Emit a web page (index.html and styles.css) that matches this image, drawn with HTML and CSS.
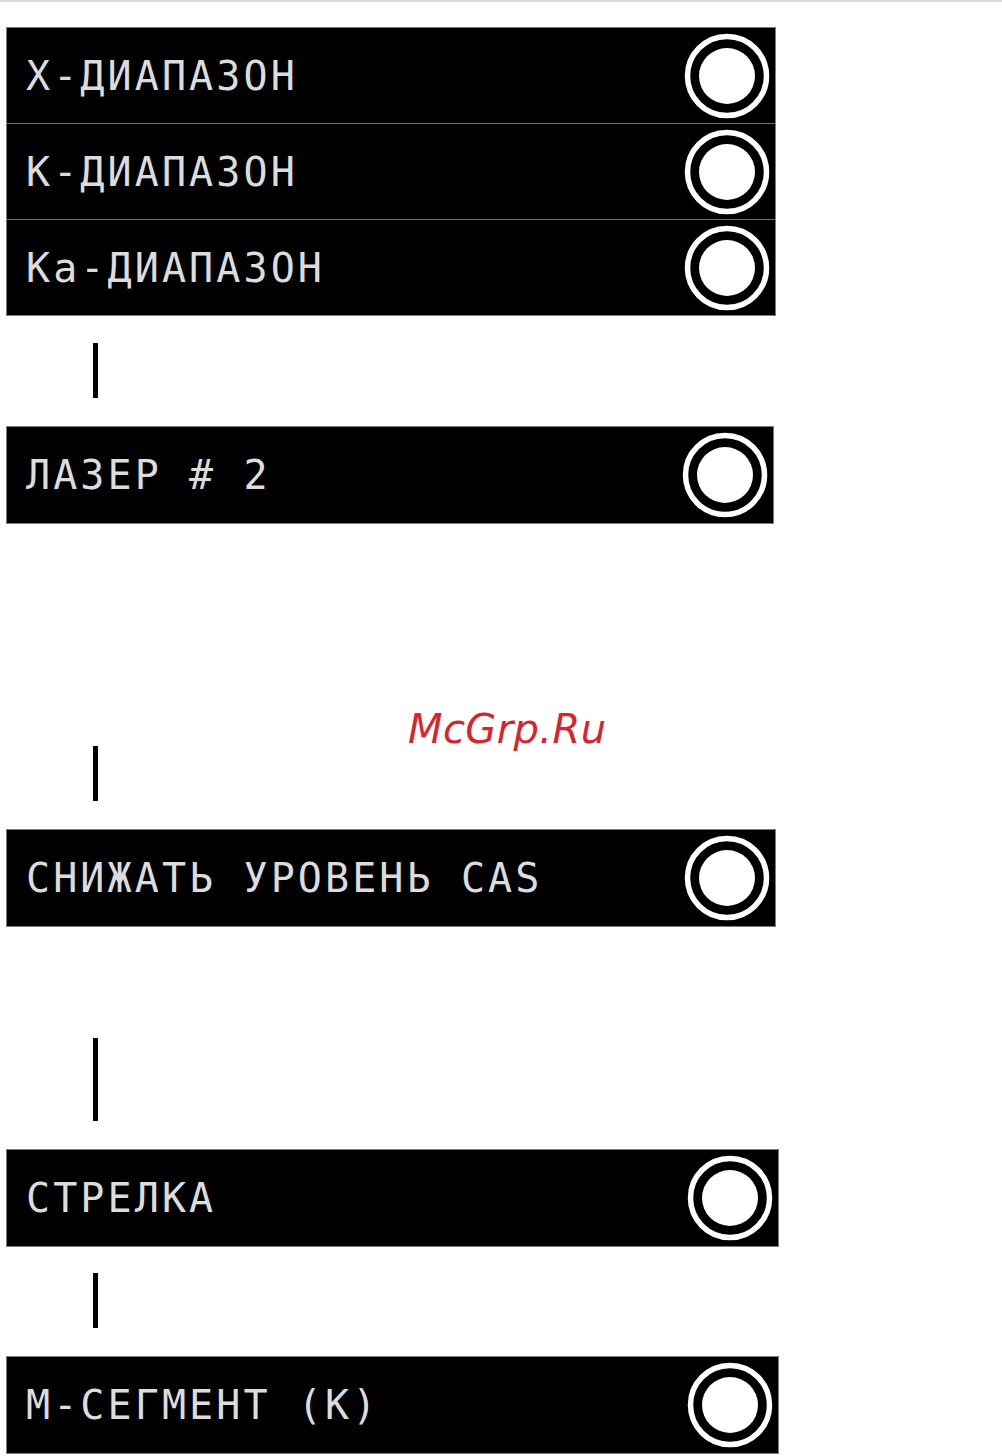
FILE: index.html
```html
<!DOCTYPE html>
<html lang="ru">
<head>
    <meta charset="UTF-8">
    <title>Меню настроек</title>
    <link rel="stylesheet" href="styles.css">
</head>
<body>
<div class="topline"></div>
<div class="page">
    <div class="panel panel-bands">
        <div class="row">
            <span class="label">Х-ДИАПАЗОН</span>
            <svg class="knob" width="86" height="86" viewBox="0 0 86 86"><circle cx="43" cy="43" r="39.5" fill="none" stroke="#fff" stroke-width="5.5"/><circle cx="43" cy="43" r="28" fill="#fff"/></svg>
        </div>
        <div class="row">
            <span class="label">К-ДИАПАЗОН</span>
            <svg class="knob" width="86" height="86" viewBox="0 0 86 86"><circle cx="43" cy="43" r="39.5" fill="none" stroke="#fff" stroke-width="5.5"/><circle cx="43" cy="43" r="28" fill="#fff"/></svg>
        </div>
        <div class="row">
            <span class="label">Ка-ДИАПАЗОН</span>
            <svg class="knob" width="86" height="86" viewBox="0 0 86 86"><circle cx="43" cy="43" r="39.5" fill="none" stroke="#fff" stroke-width="5.5"/><circle cx="43" cy="43" r="28" fill="#fff"/></svg>
        </div>
    </div>

    <div class="bar bar-first"></div>

    <div class="panel panel-laser">
        <div class="row">
            <span class="label">ЛАЗЕР # 2</span>
            <svg class="knob" width="86" height="86" viewBox="0 0 86 86"><circle cx="43" cy="43" r="39.5" fill="none" stroke="#fff" stroke-width="5.5"/><circle cx="43" cy="43" r="28" fill="#fff"/></svg>
        </div>
    </div>

    <div class="bar bar-after-gap"></div>

    <div class="panel">
        <div class="row">
            <span class="label">СНИЖАТЬ УРОВЕНЬ CAS</span>
            <svg class="knob" width="86" height="86" viewBox="0 0 86 86"><circle cx="43" cy="43" r="39.5" fill="none" stroke="#fff" stroke-width="5.5"/><circle cx="43" cy="43" r="28" fill="#fff"/></svg>
        </div>
    </div>

    <div class="bar bar-long"></div>

    <div class="panel panel-wide">
        <div class="row">
            <span class="label">СТРЕЛКА</span>
            <svg class="knob" width="86" height="86" viewBox="0 0 86 86"><circle cx="43" cy="43" r="39.5" fill="none" stroke="#fff" stroke-width="5.5"/><circle cx="43" cy="43" r="28" fill="#fff"/></svg>
        </div>
    </div>

    <div class="bar"></div>

    <div class="panel panel-wide">
        <div class="row">
            <span class="label">М-СЕГМЕНТ (К)</span>
            <svg class="knob" width="86" height="86" viewBox="0 0 86 86"><circle cx="43" cy="43" r="39.5" fill="none" stroke="#fff" stroke-width="5.5"/><circle cx="43" cy="43" r="28" fill="#fff"/></svg>
        </div>
    </div>
</div>
<div class="watermark">McGrp.Ru</div>
</body>
</html>
```

FILE: styles.css
```css
body {
    margin: 0;
    padding: 0;
    background: #ffffff;
    font-family: 'DejaVu Sans', sans-serif;
    position: relative;
    min-height: 1456px;
}
.topline {
    height: 2px;
    background: #d9d9d9;
}
.page {
    padding: 25px 0 0 6px;
    display: flex;
    flex-direction: column;
}
.panel {
    width: 770px;
    box-sizing: border-box;
    background: #000000;
    border: 1px solid #7c7c7c;
}
.panel-laser {
    width: 768px;
}
.panel-wide {
    width: 773px;
}
.row {
    height: 96px;
    display: flex;
    align-items: center;
    justify-content: space-between;
    padding: 0 5px 0 19px;
}
.panel-bands .row {
    height: 95px;
}
.panel-bands .row + .row {
    border-top: 1px solid #6a6a6a;
}
.label {
    color: #dcdcdc;
    font-family: 'DejaVu Sans Mono', 'Liberation Mono', monospace;
    font-size: 40px;
    letter-spacing: 3.1px;
    white-space: pre;
}
.knob {
    display: block;
    flex-shrink: 0;
}
.bar {
    width: 5px;
    height: 55px;
    background: #000000;
    margin: 26px 0 28px 87px;
}
.bar-first {
    margin-top: 27px;
}
.bar-after-gap {
    margin-top: 222px;
}
.bar-long {
    height: 83px;
    margin-top: 111px;
}
.watermark {
    position: absolute;
    left: 408px;
    top: 709px;
    color: #d6252b;
    font-family: 'DejaVu Sans', sans-serif;
    font-style: italic;
    font-size: 40px;
    line-height: 40px;
    letter-spacing: 0.4px;
}
```
